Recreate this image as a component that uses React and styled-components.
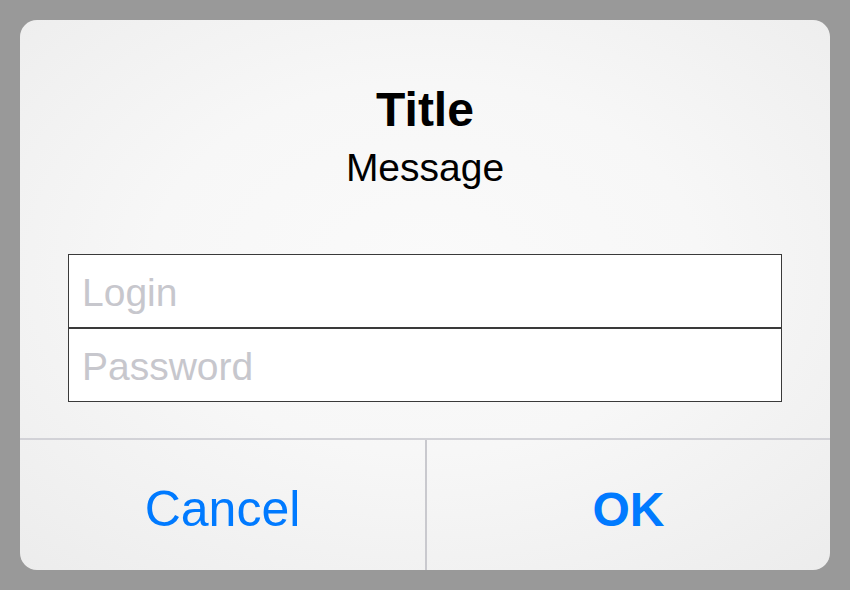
import styled, { createGlobalStyle } from "styled-components";

const GlobalStyle = createGlobalStyle`
  html, body {
    margin: 0;
    padding: 0;
    background: #999999;
  }
  * {
    box-sizing: border-box;
  }
`;

const Page = styled.div`
  width: 850px;
  height: 590px;
  padding: 20px;
  background: #999999;
  font-family: "Liberation Sans", Arial, sans-serif;
`;

const Dialog = styled.div`
  width: 810px;
  height: 550px;
  border-radius: 17px;
  overflow: hidden;
  display: flex;
  flex-direction: column;
  background: radial-gradient(
    ellipse 75% 75% at 50% 45%,
    #fafafa 0%,
    #f7f7f7 45%,
    #ececec 100%
  );
`;

const Header = styled.div`
  padding-top: 62px;
  text-align: center;
  color: #000;
`;

const Title = styled.h1`
  margin: 0;
  font-size: 48px;
  line-height: 56px;
  font-weight: bold;
`;

const Message = styled.p`
  margin: 7px 0 0;
  font-size: 39px;
  line-height: 46px;
`;

const Fields = styled.div`
  margin: 63px 48px 0;
  border: 1px solid #3a3a3a;
  background: #fff;
  display: flex;
  flex-direction: column;
`;

const Field = styled.input`
  display: block;
  width: 100%;
  height: ${(p) => (p.$first ? "74px" : "72px")};
  margin: 0;
  padding: 3px 0 0 13px;
  border: none;
  border-bottom: ${(p) => (p.$first ? "2px solid #3a3a3a" : "none")};
  outline: none;
  background: #fff;
  font-family: "Liberation Sans", Arial, sans-serif;
  font-size: 39px;
  color: #000;

  &::placeholder {
    color: #c7c7cd;
  }
`;

const Actions = styled.div`
  margin-top: auto;
  height: 132px;
  border-top: 2px solid #d2d2d7;
  display: flex;
`;

const Action = styled.button`
  flex: ${(p) => (p.$left ? "0 0 407px" : "1 1 auto")};
  border: none;
  border-right: ${(p) => (p.$left ? "2px solid #c9c9ce" : "none")};
  background: transparent;
  display: flex;
  align-items: center;
  justify-content: center;
  padding: 8px 0 0;
  font-family: "Liberation Sans", Arial, sans-serif;
  font-size: ${(p) => (p.$bold ? "48px" : "50px")};
  font-weight: ${(p) => (p.$bold ? "bold" : "normal")};
  color: #007aff;
  cursor: pointer;
`;

const App = () => {
  return (
    <Page>
      <GlobalStyle />
      <Dialog>
        <Header>
          <Title>Title</Title>
          <Message>Message</Message>
        </Header>
        <Fields>
          <Field $first type="text" placeholder="Login" />
          <Field type="password" placeholder="Password" />
        </Fields>
        <Actions>
          <Action $left>Cancel</Action>
          <Action $bold>OK</Action>
        </Actions>
      </Dialog>
    </Page>
  );
};

export default App;
